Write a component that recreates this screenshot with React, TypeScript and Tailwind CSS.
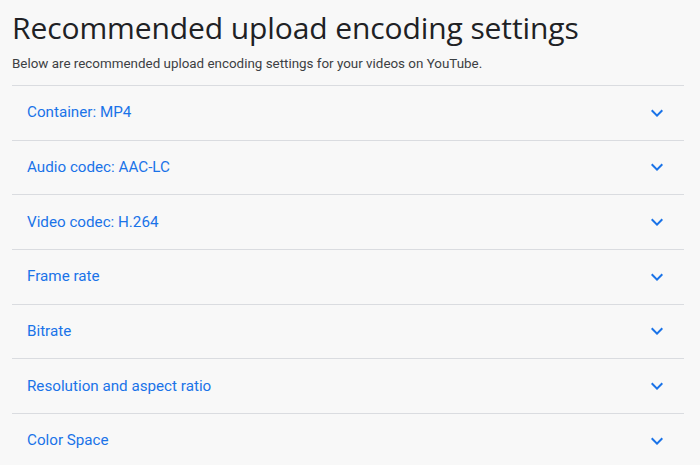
import React from "react";

const items = [
  "Container: MP4",
  "Audio codec: AAC-LC",
  "Video codec: H.264",
  "Frame rate",
  "Bitrate",
  "Resolution and aspect ratio",
  "Color Space",
];

function Chevron() {
  return (
    <svg width="24" height="24" viewBox="0 0 24 24" fill="#1a73e8">
      <path d="M16.59 8.59L12 13.17 7.41 8.59 6 10l6 6 6-6z" />
    </svg>
  );
}

export default function App() {
  return (
    <div className="w-[700px] h-[465px] overflow-hidden bg-[#f8f8f8] px-3" style={{ fontFamily: "Roboto, sans-serif" }}>
      <h1
        className="text-[30px] leading-[36px] pt-[10px] text-[#202124] tracking-[-0.1px]"
        style={{ fontFamily: "'Open Sans', sans-serif" }}
      >
        Recommended upload encoding settings
      </h1>
      <p className="text-[13.4px] leading-[20px] mt-[8px] text-[#3c4043]">
        Below are recommended upload encoding settings for your videos on YouTube.
      </p>
      <div className="mt-[11px] w-[672px]">
        {items.map((t) => (
          <div
            key={t}
            className="h-[54.67px] border-t border-[#dadce0] flex items-center justify-between pl-[15px] pr-[15px]"
          >
            <span className="text-[15.2px] text-[#1a73e8]">{t}</span>
            <Chevron />
          </div>
        ))}
      </div>
    </div>
  );
}
